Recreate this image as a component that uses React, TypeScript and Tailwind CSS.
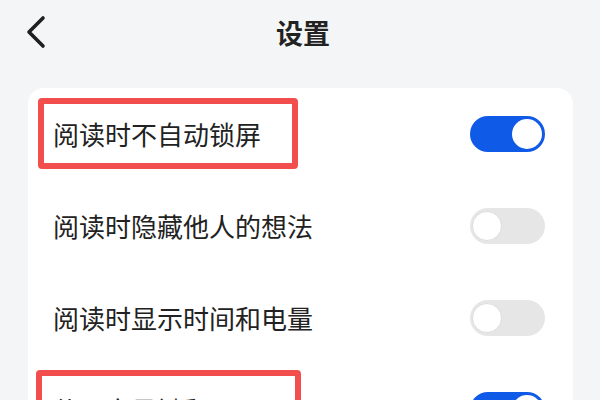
import { useState } from "react";

interface Setting {
  label: string;
  on: boolean;
  box?: string;
}

const initial: Setting[] = [
  { label: "阅读时不自动锁屏", on: true, box: "left-[-15px] top-[10px] h-[71px] w-[260px]" },
  { label: "阅读时隐藏他人的想法", on: false },
  { label: "阅读时显示时间和电量", on: false },
  { label: "使用音量键翻页", on: true, box: "left-[-17px] top-[6px] h-[72px] w-[265px]" },
];

function Toggle({ on, onClick }: { on: boolean; onClick: () => void }) {
  return (
    <button
      onClick={onClick}
      className={`relative h-[36px] w-[75px] shrink-0 rounded-full ${
        on ? "bg-[#0f5ae6]" : "bg-[#e6e6e6]"
      }`}
    >
      <span
        className={`absolute top-[3px] h-[30px] w-[30px] rounded-full bg-white ${
          on ? "right-[3px]" : "left-[2px] border border-[#dedede]"
        }`}
      />
    </button>
  );
}

export default function App() {
  const [items, setItems] = useState(initial);

  const flip = (i: number) =>
    setItems((prev) => prev.map((s, j) => (j === i ? { ...s, on: !s.on } : s)));

  return (
    <div
      className="h-[400px] w-[600px] overflow-hidden bg-[#f4f5f7] text-[#222]"
      style={{ fontFamily: '"Noto Sans CJK SC", "Noto Sans", sans-serif' }}
    >
      {/* header */}
      <div className="relative flex h-[64px] items-center justify-center pl-[6px]">
        <svg
          className="absolute left-[23px] top-[15px]"
          width="28"
          height="34"
          viewBox="0 0 28 34"
          fill="none"
          stroke="#1f1f1f"
          strokeWidth="3.6"
          strokeLinecap="round"
          strokeLinejoin="round"
        >
          <path d="M20 3 L6 17 L20 31" />
        </svg>
        <h1 className="text-[27px] font-bold leading-none">设置</h1>
      </div>

      {/* card */}
      <div className="ml-[28px] mr-[27px] mt-[24px] rounded-[16px] bg-white pl-[25px] pr-[28px]">
        {items.map((s, i) => (
          <div key={i} className="relative flex h-[92px] items-center justify-between">
            <span className="text-[26px] leading-none">{s.label}</span>
            <Toggle on={s.on} onClick={() => flip(i)} />
            {s.box && (
              <div
                className={`pointer-events-none absolute rounded-[4px] border-[6px] border-[#f24e4e] ${s.box}`}
              />
            )}
          </div>
        ))}
      </div>
    </div>
  );
}
